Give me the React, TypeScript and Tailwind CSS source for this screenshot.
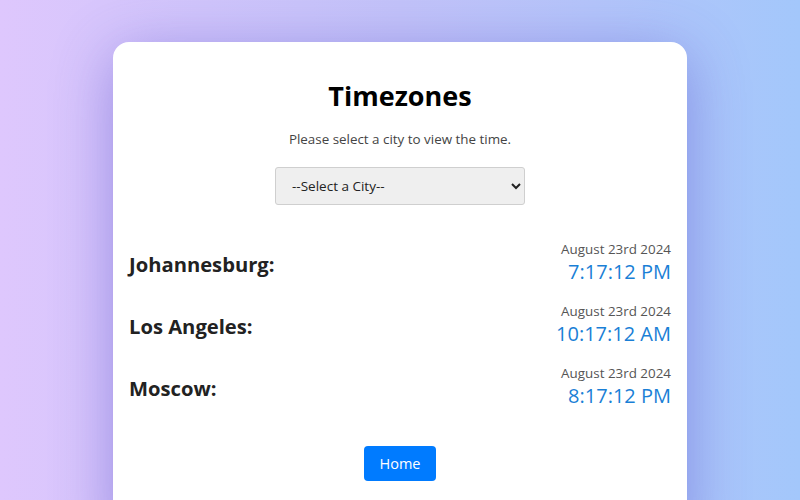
import React from "react";

const cities = [
  { name: "Johannesburg", date: "August 23rd 2024", time: "7:17:12 PM" },
  { name: "Los Angeles", date: "August 23rd 2024", time: "10:17:12 AM" },
  { name: "Moscow", date: "August 23rd 2024", time: "8:17:12 PM" },
];

export default function App() {
  return (
    <div className="w-full h-[500px] overflow-hidden bg-gradient-to-r from-[#dec7fd] via-[#c3c3f9] to-[#a3c7fb] flex justify-center pt-[42px] font-['Open_Sans',sans-serif]">
      <div className="w-[574px] h-[500px] bg-white rounded-2xl shadow-[0_12px_60px_rgba(80,70,200,0.45)] px-4 pt-[37px]">
        <h1 className="text-center text-[27px] leading-[33px] font-bold text-black">Timezones</h1>
        <p className="text-center text-[13.4px] leading-5 text-[#444] mt-[17px]">
          Please select a city to view the time.
        </p>
        <div className="flex justify-center mt-[18px]">
          <select className="w-[250px] h-[38px] bg-[#efefef] border border-[#cfcfcf] rounded-[3px] px-3 text-[13.5px] text-[#222]">
            <option>--Select a City--</option>
          </select>
        </div>

        <div className="mt-[34px] flex flex-col gap-[16px]">
          {cities.map((c) => (
            <div key={c.name} className="flex items-center justify-between">
              <span className="text-[20.2px] font-bold text-[#222] mt-1">{c.name}:</span>
              <div className="flex flex-col items-end">
                <span className="text-[13.4px] leading-5 text-[#555]">{c.date}</span>
                <span className="text-[20px] leading-[26px] text-[#1a7fd6]">{c.time}</span>
              </div>
            </div>
          ))}
        </div>

        <div className="flex justify-center mt-[37px]">
          <button className="w-[72px] h-[35px] bg-[#007bff] text-white text-[14.5px] rounded">Home</button>
        </div>
      </div>
    </div>
  );
}
